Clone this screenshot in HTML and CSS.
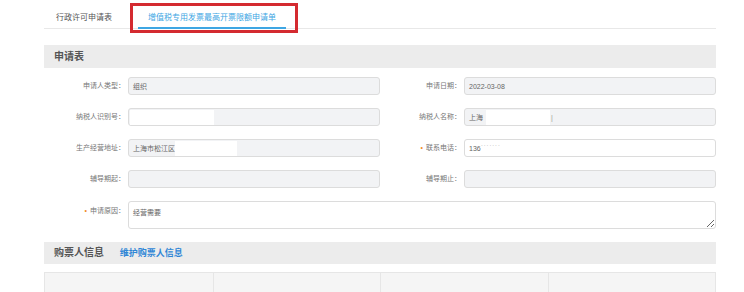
FILE: index.html
```html
<!DOCTYPE html>
<html lang="zh-CN">

<head>
  <meta charset="UTF-8">
  <meta name="viewport" content="width=device-width, initial-scale=1.0">
  <title>增值税专用发票最高开票限额申请单</title>
  <link rel="stylesheet" href="styles.css">
</head>

<body>
  <div class="page">
    <div class="tabs">
      <div class="tab">行政许可申请表</div>
      <div class="tab tab-active">增值税专用发票最高开票限额申请单</div>
    </div>
    <div class="mark-box"></div>

    <div class="section">
      <div class="section-head">申请表</div>
      <div class="form-grid">
        <div class="form-label">申请人类型：</div>
        <div class="form-input">组织</div>
        <div class="form-label">申请日期：</div>
        <div class="form-input">2022-03-08</div>

        <div class="form-label">纳税人识别号：</div>
        <div class="form-input"><span class="mask mask-id"></span></div>
        <div class="form-label">纳税人名称：</div>
        <div class="form-input">上海<span class="mask mask-name"></span><span class="mask-end">|</span></div>

        <div class="form-label">生产经营地址：</div>
        <div class="form-input">上海市松江区<span class="mask mask-addr"></span></div>
        <div class="form-label"><span class="req">•</span>联系电话：</div>
        <div class="form-input form-edit">136<span class="dots">·······</span></div>

        <div class="form-label">辅导期起：</div>
        <div class="form-input"></div>
        <div class="form-label">辅导期止：</div>
        <div class="form-input"></div>

        <div class="form-label form-label-top"><span class="req">•</span>申请原因：</div>
        <textarea class="form-area" readonly>经营需要</textarea>
      </div>
    </div>

    <div class="section section-buyer">
      <div class="section-head">购票人信息 <a class="head-link">维护购票人信息</a></div>
      <div class="buyer-table">
        <div class="buyer-cell"></div>
        <div class="buyer-cell"></div>
        <div class="buyer-cell"></div>
        <div class="buyer-cell"></div>
      </div>
    </div>
  </div>
</body>

</html>
```

FILE: styles.css
```css
* {
  font-family: 'Liberation Sans', 'Noto Sans CJK SC', sans-serif;
  padding: 0;
  margin: 0;
  box-sizing: border-box;
}

body {
  background: #fff;
}

.page {
  position: relative;
  width: 744px;
  height: 292px;
  padding: 0 28px 0 44px;
  overflow: hidden;
}

.tabs {
  display: flex;
  align-items: flex-end;
  border-bottom: 1px solid #e8e8e8;
}

.tab {
  font-size: 8px;
  line-height: 10px;
  color: #555;
  padding: 13px 12px 4px;
  border-bottom: 2px solid transparent;
  margin-bottom: -1px;
  margin-right: 14px;
}

.tab-active {
  color: #3ea6e3;
  border-bottom-color: #3ea6e3;
  padding: 13px 10px 4px;
}

/* annotation box around the active tab */
.mark-box {
  position: absolute;
  left: 130px;
  top: 3px;
  width: 168px;
  height: 30px;
  border: 3px solid #d42a30;
}

.section {
  margin-top: 16px;
}

.section-head {
  height: 23px;
  line-height: 23px;
  background: #ececec;
  padding-left: 10px;
  font-size: 10px;
  font-weight: 700;
  color: #555;
}

.form-grid {
  display: grid;
  grid-template-columns: 84px 252px 84px 252px;
  grid-auto-rows: 18px;
  row-gap: 13px;
  padding-top: 9px;
}

.form-label {
  font-size: 7px;
  line-height: 18px;
  color: #777;
  text-align: right;
  padding-right: 3px;
}

.form-label-top {
  line-height: 20px;
}

.req {
  color: #f08a24;
  margin-right: 3px;
}

.form-input {
  display: flex;
  align-items: center;
  height: 18px;
  background: #f2f3f5;
  border: 1px solid #dcdcdc;
  border-radius: 3px;
  padding-left: 4px;
  font-size: 7px;
  color: #666;
}

.form-edit {
  background: #fff;
}

.mask {
  display: inline-block;
  height: 15px;
  background: #fff;
}

.mask-id {
  width: 84px;
  margin-left: -3px;
}

.mask-name {
  width: 64px;
  margin-left: 3px;
}

.mask-end {
  color: #999;
  margin-left: 1px;
}

.mask-addr {
  width: 62px;
}

.dots {
  color: #c4c4c4;
  letter-spacing: 0.5px;
  margin-top: -5px;
}

.form-area {
  grid-column: 2 / 5;
  height: 28px;
  border: 1px solid #dcdcdc;
  border-radius: 3px;
  padding: 5px 4px;
  font-size: 7px;
  color: #666;
  background: #fff;
  resize: vertical;
  outline: none;
}

.section-buyer {
  margin-top: 23px;
}

.section-buyer .section-head {
  height: 22px;
  line-height: 22px;
}

.head-link {
  color: #2f86d6;
  font-size: 9px;
  margin-left: 13px;
}

.buyer-table {
  display: grid;
  grid-template-columns: repeat(4, 1fr);
  margin-top: 8px;
  border: 1px solid #e6e6e6;
  background: #f5f5f5;
  height: 30px;
}

.buyer-cell {
  border-left: 1px solid #e6e6e6;
}

.buyer-cell:first-child {
  border-left: none;
}
```
